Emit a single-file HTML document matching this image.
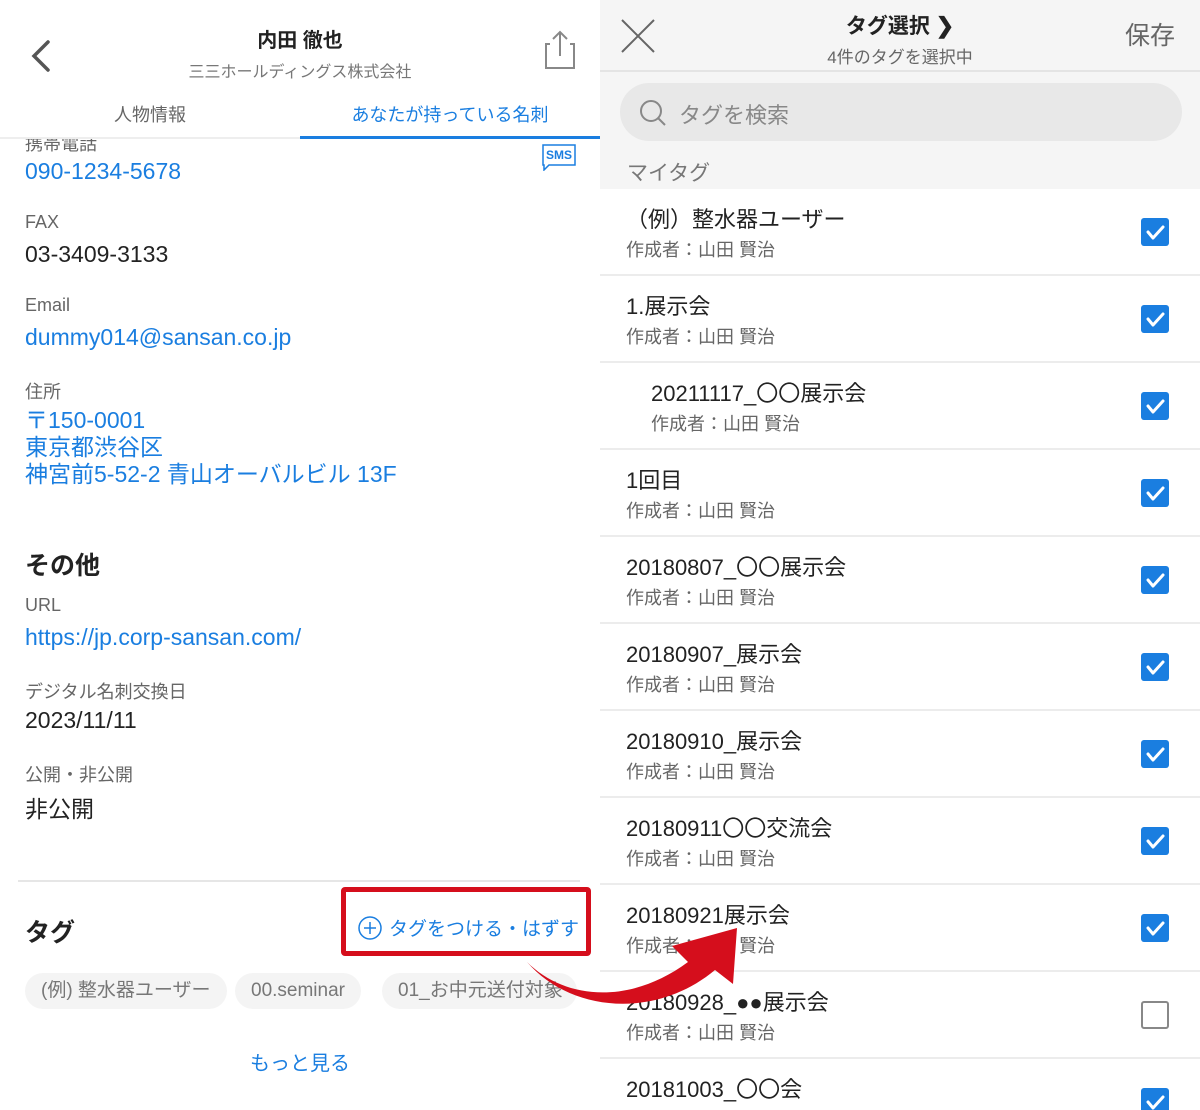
<!DOCTYPE html>
<html><head><meta charset="utf-8"><style>
*{margin:0;padding:0;box-sizing:border-box}
html,body{width:1200px;height:1110px;overflow:hidden}
body{background:#fff;font-family:"Liberation Sans","Noto Sans CJK JP",sans-serif;position:relative}
.a{position:absolute;white-space:nowrap}
.lab{font-size:18px;color:#666}
.val{font-size:23px;color:#222}
.blue{color:#1a7ee0}
.row{position:absolute;left:600px;width:600px;height:87px;background:#fff;border-bottom:2px solid #ececec}
.row .t{position:absolute;left:26px;top:13px;font-size:22px;color:#222;white-space:nowrap}
.row .s{position:absolute;left:26px;top:47px;font-size:18px;color:#666;white-space:nowrap}
.cb{position:absolute;left:541px;top:29px;width:28px;height:28px;border-radius:3px;background:#1a7ee0}
.cb.off{background:#fff;border:2px solid #888}
.chip{position:absolute;top:973px;height:36px;border-radius:18px;background:#f4f4f4;color:#777;font-size:19px;line-height:36px;padding:0 16px;white-space:nowrap}
</style></head><body>
<svg class="a" style="left:28px;top:40px" width="24" height="32"><path d="M20 2 L6 16 L20 30" fill="none" stroke="#555" stroke-width="3.5" stroke-linecap="round"/></svg>
<div class="a" style="left:0;width:600px;top:24px;text-align:center;font-size:20px;font-weight:bold;color:#222">内田 徹也</div>
<div class="a" style="left:0;width:600px;top:58px;text-align:center;font-size:16px;color:#777">三三ホールディングス株式会社</div>
<svg class="a" style="left:544px;top:30px" width="32" height="40"><path d="M6 14 H2 V38 H30 V14 H26" fill="none" stroke="#888" stroke-width="2"/><path d="M16 2 V26 M9 9 L16 2 L23 9" fill="none" stroke="#888" stroke-width="2"/></svg>
<div class="a" style="left:0;width:300px;top:101px;text-align:center;font-size:18px;color:#666">人物情報</div>
<div class="a" style="left:300px;width:300px;top:101px;text-align:center;font-size:18px"><span class="blue">あなたが持っている名刺</span></div>
<div class="a" style="left:0;top:137px;width:600px;height:2px;background:#eee"></div>
<div class="a" style="left:300px;top:136px;width:300px;height:3px;background:#1a7ee0"></div>
<div class="a lab" style="left:25px;top:130px;clip-path:inset(9px 0 0 0)">携帯電話</div>
<svg class="a" style="left:541px;top:143px" width="36" height="28"><path d="M2 2 H34 V22 H8 L3 27 V22 H2 Z" fill="none" stroke="#1a7ee0" stroke-width="1.5"/><text x="18" y="16" font-size="12" font-weight="bold" fill="#1a7ee0" text-anchor="middle" font-family="Liberation Sans">SMS</text></svg>
<div class="a val blue" style="left:25px;top:158px">090-1234-5678</div>
<div class="a lab" style="left:25px;top:212px">FAX</div>
<div class="a val" style="left:25px;top:241px">03-3409-3133</div>
<div class="a lab" style="left:25px;top:295px">Email</div>
<div class="a val blue" style="left:25px;top:324px">dummy014@sansan.co.jp</div>
<div class="a lab" style="left:25px;top:378px">住所</div>
<div class="a val blue" style="left:25px;top:407px;line-height:27px">〒150-0001<br>東京都渋谷区<br>神宮前5-52-2 青山オーバルビル 13F</div>
<div class="a" style="left:25px;top:546px;font-size:25px;font-weight:bold;color:#222">その他</div>
<div class="a lab" style="left:25px;top:595px">URL</div>
<div class="a val blue" style="left:25px;top:624px">https://jp.corp-sansan.com/</div>
<div class="a lab" style="left:25px;top:678px">デジタル名刺交換日</div>
<div class="a val" style="left:25px;top:707px">2023/11/11</div>
<div class="a lab" style="left:25px;top:761px">公開・非公開</div>
<div class="a val" style="left:25px;top:790px">非公開</div>
<div class="a" style="left:18px;top:880px;width:562px;height:2px;background:#e6e6e6"></div>
<div class="a" style="left:25px;top:913px;font-size:25px;font-weight:bold;color:#222">タグ</div>
<div class="a" style="left:341px;top:887px;width:250px;height:69px;border:5px solid #d50e1c;border-radius:4px"></div>
<svg class="a" style="left:357px;top:915px" width="26" height="26"><circle cx="13" cy="13" r="11" fill="none" stroke="#1a7ee0" stroke-width="1.5"/><path d="M13 7 V19 M7 13 H19" stroke="#1a7ee0" stroke-width="1.5"/></svg>
<div class="a blue" style="left:389px;top:914px;font-size:19px">タグをつける・はずす</div>
<div class="chip" style="left:25px">(例) 整水器ユーザー</div>
<div class="chip" style="left:235px">00.seminar</div>
<div class="chip" style="left:382px;width:195px;overflow:hidden">01_お中元送付対象</div>
<div class="a blue" style="left:0;width:600px;top:1047px;text-align:center;font-size:20px">もっと見る</div>
<div class="a" style="left:600px;top:0;width:600px;height:189px;background:#f5f5f5"></div>
<div class="a" style="left:600px;top:70px;width:600px;height:2px;background:#e4e4e4"></div>
<svg class="a" style="left:620px;top:18px" width="36" height="36"><path d="M2 2 L34 34 M34 2 L2 34" stroke="#666" stroke-width="2"/></svg>
<div class="a" style="left:600px;width:600px;top:10px;text-align:center;font-size:21px;font-weight:bold;color:#222">タグ選択 <span style="font-size:22px">❯</span></div>
<div class="a" style="left:600px;width:600px;top:43px;text-align:center;font-size:17px;color:#666">4件のタグを選択中</div>
<div class="a" style="left:1125px;top:16px;font-size:25px;color:#666">保存</div>
<div class="a" style="left:620px;top:83px;width:562px;height:58px;border-radius:29px;background:#e8e8e8"></div>
<svg class="a" style="left:638px;top:98px" width="30" height="30"><circle cx="13" cy="13" r="10" fill="none" stroke="#888" stroke-width="2"/><path d="M20 20 L27 27" stroke="#888" stroke-width="2"/></svg>
<div class="a" style="left:679px;top:98px;font-size:22px;color:#888">タグを検索</div>
<div class="a" style="left:627px;top:157px;font-size:21px;color:#777">マイタグ</div>

<div class="row" style="top:189px"><div class="t">（例）整水器ユーザー</div><div class="s">作成者：山田 賢治</div><div class="cb"></div></div>
<div class="row" style="top:276px"><div class="t">1.展示会</div><div class="s">作成者：山田 賢治</div><div class="cb"></div></div>
<div class="row" style="top:363px"><div class="t" style="left:51px">20211117_〇〇展示会</div><div class="s" style="left:51px">作成者：山田 賢治</div><div class="cb"></div></div>
<div class="row" style="top:450px"><div class="t">1回目</div><div class="s">作成者：山田 賢治</div><div class="cb"></div></div>
<div class="row" style="top:537px"><div class="t">20180807_〇〇展示会</div><div class="s">作成者：山田 賢治</div><div class="cb"></div></div>
<div class="row" style="top:624px"><div class="t">20180907_展示会</div><div class="s">作成者：山田 賢治</div><div class="cb"></div></div>
<div class="row" style="top:711px"><div class="t">20180910_展示会</div><div class="s">作成者：山田 賢治</div><div class="cb"></div></div>
<div class="row" style="top:798px"><div class="t">20180911〇〇交流会</div><div class="s">作成者：山田 賢治</div><div class="cb"></div></div>
<div class="row" style="top:885px"><div class="t">20180921展示会</div><div class="s">作成者：山田 賢治</div><div class="cb"></div></div>
<div class="row" style="top:972px"><div class="t">20180928_●●展示会</div><div class="s">作成者：山田 賢治</div><div class="cb off"></div></div>
<div class="row" style="top:1059px"><div class="t">20181003_〇〇会</div><div class="s">作成者：山田 賢治</div><div class="cb"></div></div>
<svg class="a" style="left:0;top:0;pointer-events:none" width="1200" height="1110">
<g fill="none" stroke="#fff" stroke-width="3" stroke-linecap="round" stroke-linejoin="round">
<path d="M1148 232 l5 6 l10 -11"/><path d="M1148 319 l5 6 l10 -11"/><path d="M1148 406 l5 6 l10 -11"/><path d="M1148 493 l5 6 l10 -11"/><path d="M1148 580 l5 6 l10 -11"/><path d="M1148 667 l5 6 l10 -11"/><path d="M1148 754 l5 6 l10 -11"/><path d="M1148 841 l5 6 l10 -11"/><path d="M1148 928 l5 6 l10 -11"/><path d="M1148 1102 l5 6 l10 -11"/>
</g>
<path d="M527 962 C565 1000 630 1005 688 962 L672 946 L737 928 L733 984 L715 970 C655 1020 570 1012 527 962 Z" fill="#d50e1c"/>
</svg>
</body></html>
